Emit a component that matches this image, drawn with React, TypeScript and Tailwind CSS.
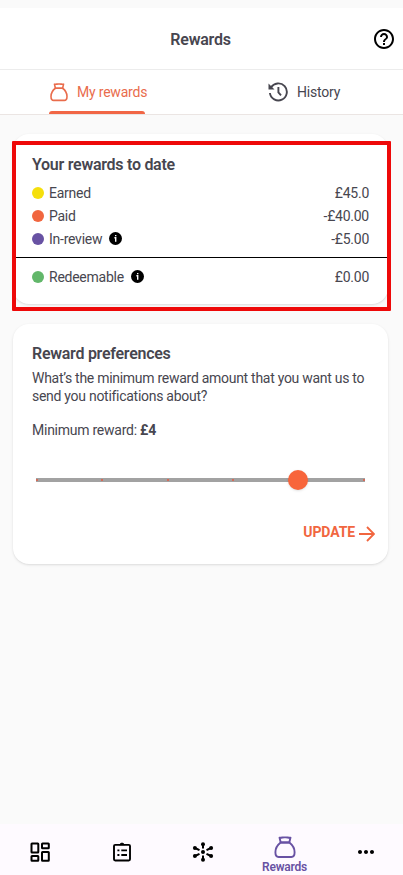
import React from 'react';
import { MdHelpOutline, MdMoreHoriz } from 'react-icons/md';

const BagIcon: React.FC<{ className?: string }> = ({ className }) => (
  <svg viewBox="0 0 24 24" fill="none" stroke="currentColor" strokeWidth="1.9" strokeLinejoin="round" className={className}>
    <path d="M6.500 2.600c2 .5 3.500-.5 5.500-.2 2-.3 3.500.7 5.500.2L16.300 7.500H7.700z" />
    <path d="M7.700 7.500h8.600c3.100 2.300 5.300 6.300 5.300 9.800 0 2.600-1.300 4.700-3.200 4.700H5.600c-1.900 0-3.200-2.100-3.200-4.700 0-3.500 2.200-7.500 5.300-9.800z" />
  </svg>
);

const HistoryIcon: React.FC = () => (
  <svg viewBox="0 0 20 20" fill="none" stroke="currentColor" strokeWidth="1.9" className="mr-[9px] h-5 w-5">
    <path d="M3 5.600A8.500 8.500 0 1 1 1.900 11" />
    <path d="M10.400 5v5.300l2.600 3" />
    <path d="M.5 1.500V7.500h6z" fill="currentColor" stroke="none" />
  </svg>
);

const InfoIcon: React.FC = () => (
  <svg viewBox="0 0 13 13" className="ml-[7px] h-[13px] w-[13px]">
    <circle cx="6.500" cy="6.500" r="6.500" fill="black" />
    <path d="M5.400 5.700h1.300v4.100M6.700 2.900v1.400" fill="none" stroke="white" strokeWidth="1.400" />
  </svg>
);

const DashboardIcon: React.FC = () => (
  <svg viewBox="0 0 20 20" fill="none" stroke="currentColor" strokeWidth="2" strokeLinejoin="round" className="h-5 w-5">
    <rect x="1.500" y="1.500" width="6.800" height="9" rx=".5" />
    <rect x="12" y="1.500" width="6.800" height="4.800" rx=".5" />
    <rect x="1.500" y="14" width="6.800" height="4.800" rx=".5" />
    <rect x="12" y="10" width="6.800" height="8.800" rx=".5" />
  </svg>
);

const ClipboardIcon: React.FC = () => (
  <svg viewBox="0 0 20 20" fill="none" stroke="currentColor" strokeWidth="1.900" strokeLinejoin="round" className="h-5 w-5">
    <rect x="2" y="2.900" width="16" height="15.600" rx="1.200" />
    <path d="M7.500 2.700Q10-.500 12.500 2.700z" fill="currentColor" strokeWidth="1" />
    <path d="M5.400 8.400h2M9.300 8.400h5.700M5.400 13h2M9.300 13h5.700" strokeWidth="1.900" />
  </svg>
);

const HubIcon: React.FC = () => (
  <svg viewBox="0 0 22 22" className="h-[22px] w-[22px]" fill="currentColor" stroke="currentColor">
    <path d="M11 3v4.500M11 14.500V19M3 7l4.500 2.200M3 15l4.500-2.200M19 7l-4.500 2.200M19 15l-4.500-2.200" strokeWidth="2" />
    <g stroke="none">
      <circle cx="11" cy="11" r="2" />
      <circle cx="11" cy="3.200" r="2" />
      <circle cx="11" cy="18.800" r="2" />
      <circle cx="2.900" cy="7" r="2" />
      <circle cx="2.900" cy="15" r="2" />
      <circle cx="19.100" cy="7" r="2" />
      <circle cx="19.100" cy="15" r="2" />
    </g>
  </svg>
);

interface RewardRowProps {
  label: string;
  amount: string;
  dot: string;
  info?: boolean;
}

const RewardRow: React.FC<RewardRowProps> = ({ label, amount, dot, info }) => (
  <div className="flex h-[23px] items-center px-[19px] text-sm tracking-[-0.25px]">
    <span className={`mr-[5px] h-3 w-3 rounded-full ${dot}`} />
    <span>{label}</span>
    {info && <InfoIcon />}
    <span className="ml-auto">{amount}</span>
  </div>
);

const App: React.FC = () => {
  return (
    <div className="flex h-[875px] w-[403px] flex-col overflow-hidden bg-[#fafafa] pt-2 font-['Roboto',sans-serif] text-[#47464f]">
      {/* Header */}
      <header className="grid h-[62px] shrink-0 grid-cols-[1fr_auto_1fr] items-center border-b border-[#ececec] bg-white">
        <h1 className="col-start-2 -ml-0.5 pt-0.5 text-base font-semibold tracking-[-0.25px]">Rewards</h1>
        <MdHelpOutline className="mr-[7px] h-6 w-6 justify-self-end text-black" />
      </header>

      {/* Tabs */}
      <nav className="flex h-[45px] shrink-0 border-b border-[#ebe5e3] bg-white text-sm tracking-[-0.2px]">
        <div className="relative ml-[49px] flex w-24 items-center text-[#e96c4c]">
          <BagIcon className="mr-2 h-5 w-5 shrink-0" />
          <span className="whitespace-nowrap">My rewards</span>
          <span className="absolute bottom-0 left-0 h-[3px] w-full rounded-t-sm bg-[#f16645]" />
        </div>
        <div className="ml-[123px] flex items-center">
          <HistoryIcon />
          <span>History</span>
        </div>
      </nav>

      <main className="flex-1 pt-[19px] pr-[15px] pl-[13px]">
        {/* Rewards summary */}
        <section className="relative h-[170px] rounded-2xl bg-white pt-[19px] shadow">
          <h2 className="mb-[5px] pl-[19px] text-base leading-[23px] font-semibold tracking-[-0.27px]">Your rewards to date</h2>
          <RewardRow label="Earned" amount="£45.0" dot="bg-[#f5df0c]" />
          <RewardRow label="Paid" amount="-£40.00" dot="bg-[#f1663f]" />
          <RewardRow label="In-review" amount="-£5.00" dot="bg-[#6852a3]" info />
          <div className="mt-[7px] mb-[7px] h-[1px] bg-black" />
          <RewardRow label="Redeemable" amount="£0.00" dot="bg-[#62b76a]" info />
          <div className="pointer-events-none absolute top-[7px] -left-[1px] h-[170px] w-[379px] rounded-[1px] border-4 border-[#ee0909]" />
        </section>

        {/* Preferences */}
        <section className="mt-5 h-[240px] rounded-2xl bg-white px-[19px] pt-[18px] shadow">
          <h2 className="text-base leading-[23px] font-semibold tracking-[-0.27px]">Reward preferences</h2>
          <p className="mt-[5px] text-sm leading-[17.5px] tracking-[-0.28px] whitespace-nowrap">
            What’s the minimum reward amount that you want us to
            <br />
            send you notifications about?
          </p>
          <p className="mt-[15px] text-sm leading-5 tracking-[-0.25px]">
            Minimum reward: <b>£4</b>
          </p>

          <div className="relative mx-1 mt-[38px] flex h-1 items-center justify-between bg-[#a2a2a2]">
            <span className="h-0.5 w-0.5 bg-[#d36c59]" />
            <span className="h-0.5 w-0.5 bg-[#d36c59]" />
            <span className="h-0.5 w-0.5 bg-[#d36c59]" />
            <span className="h-0.5 w-0.5 bg-[#d36c59]" />
            <span className="h-0.5 w-0.5 bg-[#d36c59]" />
            <span className="h-0.5 w-0.5 bg-[#d36c59]" />
            <span className="absolute left-[252px] h-5 w-5 rounded-full bg-[#f8653b] shadow-sm" />
          </div>

          <div className="mt-10 -mr-[6px] flex h-5 items-center justify-end text-sm font-bold tracking-[-0.1px] text-[#f1663f]">
            <span>UPDATE</span>
            <svg viewBox="0 0 16 16" fill="none" stroke="currentColor" strokeWidth="1.900" className="mt-1 ml-1 h-4 w-4">
              <path d="M0 8h15M8 1l7 7-7 7" />
            </svg>
          </div>
        </section>
      </main>

      {/* Bottom navigation */}
      <footer className="grid h-[51px] shrink-0 grid-cols-[80px_83px_80px_83px_80px] items-center bg-[#fefaff] text-black">
        <div className="flex justify-center pt-1"><DashboardIcon /></div>
        <div className="flex justify-center pt-1"><ClipboardIcon /></div>
        <div className="flex justify-center pt-1"><HubIcon /></div>
        <div className="flex flex-col items-center pt-[11px] text-[#6852a3]">
          <BagIcon className="h-6 w-6 shrink-0" />
          <span className="text-xs leading-4 font-semibold tracking-[-0.25px]">Rewards</span>
        </div>
        <div className="flex justify-center pt-1"><MdMoreHoriz className="h-6 w-6" /></div>
      </footer>
    </div>
  );
};

export default App;
